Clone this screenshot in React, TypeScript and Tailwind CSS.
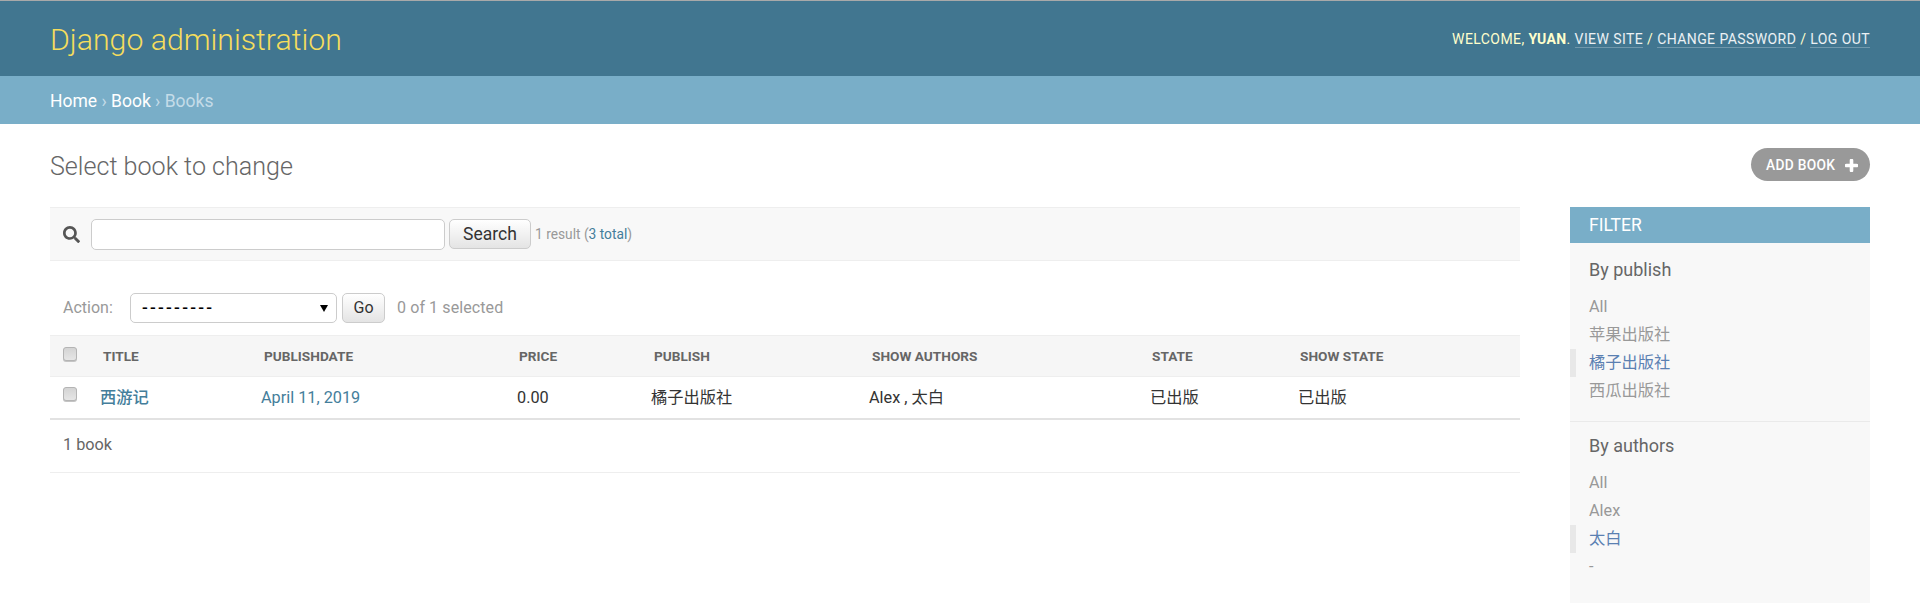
import React from "react";
import { FaSearch } from "react-icons/fa";

const FONT = "[font-family:Roboto,'Noto_Sans_CJK_SC',sans-serif]";

const columns = [
  { label: "TITLE" },
  { label: "PUBLISHDATE" },
  { label: "PRICE" },
  { label: "PUBLISH" },
  { label: "SHOW AUTHORS" },
  { label: "STATE" },
  { label: "SHOW STATE" },
];

function Check() {
  return (
    <input
      type="checkbox"
      aria-label="select"
      className="block appearance-none w-[14px] h-[14px] rounded-[3px] border border-[#b4b4b4] bg-[#dcdcdc] bg-gradient-to-b from-[#d4d4d4] to-[#e6e6e6] shadow-[0_1px_0_#c4c4c4]"
    />
  );
}

function FilterItem({ text, selected }: { text: string; selected?: boolean }) {
  return (
    <li className={`h-[28px] flex items-center pl-[13px] border-l-[6px] ${selected ? "border-[#e8e8e8] text-[#5b80b2]" : "border-transparent text-[#999]"}`}>
      {text}
    </li>
  );
}

function FilterGroup({ title, items, last }: { title: string; items: { text: string; selected?: boolean }[]; last?: boolean }) {
  return (
    <div className={last ? "" : "h-[179px] border-b border-[#eaeaea]"}>
      <h3 className={`pl-[19px] text-[18px] leading-[26px] font-normal text-[#666] ${last ? "pt-[11px] h-[47px]" : "pt-[14px] h-[50px]"}`}>{title}</h3>
      <ul className="text-[16.25px]">
        {items.map((it, i) => (
          <FilterItem key={i} text={it.text} selected={it.selected} />
        ))}
      </ul>
    </div>
  );
}

export default function App() {
  return (
    <div className={`${FONT} h-[603px] overflow-hidden flex flex-col bg-white text-[#333]`}>
      <header className="h-[76px] shrink-0 border-t border-[#a9a9a9] bg-[#417690] flex items-center justify-between px-[50px]">
        <h1 className="text-[30.25px] font-light text-[#f5dd5d] leading-[36px] pt-[2px]">Django administration</h1>
        <div className="text-[14px] tracking-[0.42px] text-[#ffc] flex items-center pt-[1px]">
          <span>WELCOME,&nbsp;<strong className="font-bold">YUAN</strong>.&nbsp;</span>
          <a className="text-white/90 border-b border-white/25 leading-[16px]">VIEW SITE</a>
          <span>&nbsp;/&nbsp;</span>
          <a className="text-white/90 border-b border-white/25 leading-[16px]">CHANGE PASSWORD</a>
          <span>&nbsp;/&nbsp;</span>
          <a className="text-white/90 border-b border-white/25 leading-[16px]">LOG OUT</a>
        </div>
      </header>

      <nav className="h-[48px] shrink-0 bg-[#79aec8] flex items-center px-[50px] pt-[2px] text-[17.5px] text-white">
        <a>Home</a>
        <span className="text-[#c4dce8]">&nbsp;›&nbsp;</span>
        <a>Book</a>
        <span className="text-[#c4dce8]">&nbsp;›&nbsp;Books</span>
      </nav>

      <main className="flex-1 min-h-0 flex flex-col px-[50px]">
        <div className="h-[83px] shrink-0 flex items-start justify-between">
          <h2 className="mt-[27px] text-[25.1px] leading-[32px] font-light text-[#666]">Select book to change</h2>
          <a className="mt-[24px] h-[33px] w-[119px] rounded-[17px] bg-[#999] text-white text-[13.75px] font-medium flex items-center pl-[15px] pt-[1px] tracking-[0.3px]">
            ADD BOOK
            <svg viewBox="0 0 13 13" className="ml-[10px] w-[13px] h-[13px]" aria-hidden="true">
              <path d="M6.5 1.5v10M1.5 6.5h10" stroke="currentColor" strokeWidth="3.6" strokeLinecap="round" fill="none" />
            </svg>
          </a>
        </div>

        <div className="flex-1 min-h-0 flex gap-[50px]">
          <section className="flex-1 min-w-0">
            <div className="h-[54px] bg-[#f8f8f8] border-y border-[#eee] flex items-center pl-[13px]">
              <FaSearch className="w-[17px] h-[17px] text-[#555]" />
              <input aria-label="search" className="ml-[11px] w-[354px] h-[31px] rounded-[5px] border border-[#ccc] bg-white" />
              <button className="ml-[4px] w-[82px] h-[30px] rounded-[5px] border border-[#ccc] bg-gradient-to-b from-white to-[#e4e4e4] text-[17.5px] text-[#333]">Search</button>
              <span className="ml-[4px] text-[13.75px] text-[#999]">1 result (<a className="text-[#447e9b]">3 total</a>)</span>
            </div>

            <div className="h-[74px] pt-[32px] pl-[13px] text-[16px] text-[#999]">
              <div className="flex items-center h-[30px]">
                <span className="w-[67px]">Action:</span>
                <div className="relative w-[207px] h-[30px]">
                  <select aria-label="action" className="w-full h-full appearance-none rounded-[5px] border border-[#ccc] bg-white pl-[11px] text-[17px] tracking-[2.25px] font-medium text-black">
                    <option>---------</option>
                  </select>
                  <span className="absolute right-[9px] top-[12px] w-0 h-0 border-x-[4px] border-x-transparent border-t-[7px] border-t-black" />
                </div>
                <button className="ml-[5px] w-[43px] h-[30px] rounded-[5px] border border-[#ccc] bg-gradient-to-b from-white to-[#e4e4e4] text-[16px] text-[#333]">Go</button>
                <span className="ml-[12px] tracking-[0.1px]">0 of 1 selected</span>
              </div>
            </div>

            <table className="w-full table-fixed border-collapse">
              <colgroup>
                <col className="w-[40px]" />
                <col className="w-[161px]" />
                <col className="w-[255px]" />
                <col className="w-[135px]" />
                <col className="w-[218px]" />
                <col className="w-[280px]" />
                <col className="w-[148px]" />
                <col />
              </colgroup>
              <thead>
                <tr className="h-[41px] bg-[#f6f6f6] border-y border-[#eee] text-[13.65px] font-bold text-[#666]">
                  <th className="pl-[13px] align-top pt-[11px] font-normal"><Check /></th>
                  {columns.map((c) => (
                    <th key={c.label} className="pl-[13px] text-left font-bold">{c.label}</th>
                  ))}
                  <th />
                </tr>
              </thead>
              <tbody>
                <tr className="h-[42px] border-b-2 border-[#e2e2e2] text-[16.25px] text-[#333]">
                  <td className="pl-[13px] align-top pt-[10px]"><Check /></td>
                  <td className="pl-[10px] pt-[2px] font-medium text-[#447e9b]">西游记</td>
                  <td className="pl-[10px] pt-[2px] text-[#447e9b]">April 11, 2019</td>
                  <td className="pl-[11px] pt-[2px]">0.00</td>
                  <td className="pl-[10px] pt-[2px]">橘子出版社</td>
                  <td className="pl-[10px] pt-[2px]">Alex , 太白</td>
                  <td className="pl-[11px] pt-[2px]">已出版</td>
                  <td className="pl-[11px] pt-[2px]">已出版</td>
                  <td />
                </tr>
              </tbody>
            </table>

            <div className="h-[53px] border-b border-[#eee] flex items-center pl-[13px] text-[16.25px] text-[#666]">1 book</div>
          </section>

          <aside className="w-[300px] shrink-0 bg-[#f8f8f8]">
            <h2 className="h-[36px] bg-[#79aec8] text-white text-[17.5px] pl-[19px] flex items-center">FILTER</h2>
            <FilterGroup
              title="By publish"
              items={[{ text: "All" }, { text: "苹果出版社" }, { text: "橘子出版社", selected: true }, { text: "西瓜出版社" }]}
            />
            <FilterGroup
              last
              title="By authors"
              items={[{ text: "All" }, { text: "Alex" }, { text: "太白", selected: true }, { text: "-" }]}
            />
          </aside>
        </div>
      </main>
    </div>
  );
}
